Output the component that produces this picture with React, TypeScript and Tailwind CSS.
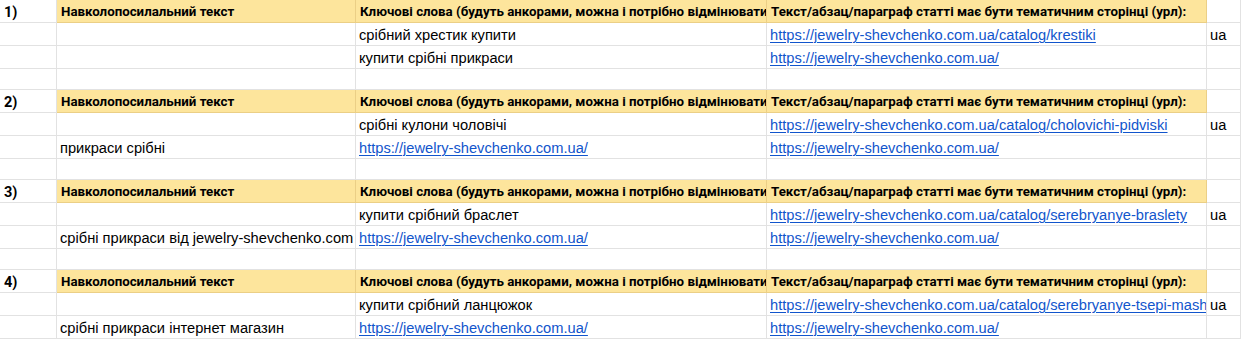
import React from 'react';

type Cell = { text?: string; link?: boolean };

const HEAD_B = 'Навколопосилальний текст';
const HEAD_C = 'Ключові слова (будуть анкорами, можна і потрібно відмінювати)';
const HEAD_D = 'Текст/абзац/параграф статті має бути тематичним сторінці (урл):';
const HOME = 'https://jewelry-shevchenko.com.ua/';

const groups: { n: string; r1: [string, string]; r2: string }[] = [
  { n: '1)', r1: ['срібний хрестик купити', 'https://jewelry-shevchenko.com.ua/catalog/krestiki'], r2: '' },
  { n: '2)', r1: ['срібні кулони чоловічі', 'https://jewelry-shevchenko.com.ua/catalog/cholovichi-pidviski'], r2: 'прикраси срібні' },
  { n: '3)', r1: ['купити срібний браслет', 'https://jewelry-shevchenko.com.ua/catalog/serebryanye-braslety'], r2: 'срібні прикраси від jewelry-shevchenko.com' },
  { n: '4)', r1: ['купити срібний ланцюжок', 'https://jewelry-shevchenko.com.ua/catalog/serebryanye-tsepi-mash'], r2: 'срібні прикраси інтернет магазин' },
];

function DataCell({ cell }: { cell?: Cell }) {
  if (!cell || !cell.text) return <div className="h-full border-r border-b border-[#e2e2e2]" />;
  return (
    <div className="h-full border-r border-b border-[#e2e2e2] overflow-hidden whitespace-nowrap pl-[3px] flex items-end pb-[1px]">
      <span className={cell.link ? 'text-[#1155cc] underline decoration-[1px] underline-offset-[2px]' : 'text-black'}>{cell.text}</span>
    </div>
  );
}

export default function App() {
  const cols = 'grid grid-cols-[57px_299px_411px_440px_34px]';
  return (
    <div className="w-[1241px] h-[339px] overflow-hidden bg-white font-['Liberation_Sans',Arial,sans-serif] text-[14.67px] leading-[17px]">
      {groups.map((g, i) => (
        <div key={i}>
          {/* шапка групи */}
          <div className={`${cols} h-[23px]`}>
            <div className="border-r border-b border-[#e2e2e2] pl-[4px] flex items-end pb-[1px] font-['Roboto',sans-serif] font-bold text-[14.5px] leading-[17px]">{g.n}</div>
            {[HEAD_B, HEAD_C, HEAD_D].map((t, j) => (
              <div key={j} className="bg-[#fde59c] border-r border-b border-[#ebcf86] overflow-hidden whitespace-nowrap pl-[4px] flex items-end pb-[2px] font-['Roboto',sans-serif] font-bold text-[13.3px] leading-[16px]">
                {t}
              </div>
            ))}
            <div className="border-r border-b border-[#e2e2e2]" />
          </div>
          <div className={`${cols} h-[23px]`}>
            <DataCell />
            <DataCell />
            <DataCell cell={{ text: g.r1[0] }} />
            <DataCell cell={{ text: g.r1[1], link: true }} />
            <DataCell cell={{ text: 'ua' }} />
          </div>
          <div className={`${cols} h-[23px]`}>
            <DataCell />
            <DataCell cell={{ text: g.r2 }} />
            <DataCell cell={i === 0 ? { text: 'купити срібні прикраси' } : { text: HOME, link: true }} />
            <DataCell cell={{ text: HOME, link: true }} />
            <DataCell />
          </div>
          <div className={`${cols} h-[21px]`}>
            <DataCell />
            <DataCell />
            <DataCell />
            <DataCell />
            <DataCell />
          </div>
        </div>
      ))}
    </div>
  );
}
